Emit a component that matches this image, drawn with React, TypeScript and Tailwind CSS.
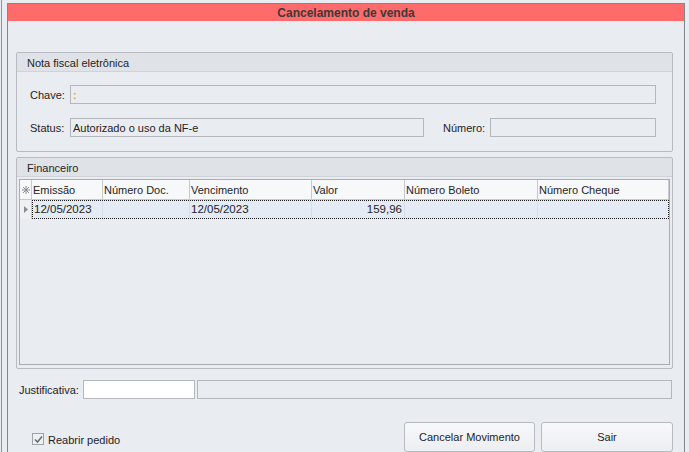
import React from "react";

const columns = [
  { key: "emissao", label: "Emissão", w: "w-[71px]" },
  { key: "doc", label: "Número Doc.", w: "w-[87px]" },
  { key: "venc", label: "Vencimento", w: "w-[122px]" },
  { key: "valor", label: "Valor", w: "w-[93px]" },
  { key: "boleto", label: "Número Boleto", w: "w-[133px]" },
  { key: "cheque", label: "Número Cheque", w: "w-[131px]" },
];

const row: Record<string, string> = {
  emissao: "12/05/2023",
  doc: "",
  venc: "12/05/2023",
  valor: "159,96",
  boleto: "",
  cheque: "",
};

function GroupHeader({ title }: { title: string }) {
  return (
    <div className="h-[19px] border-b border-[#cfd3d8] bg-[#dfe3e8] pl-[10px] pt-[3px] flex items-center leading-none">
      {title}
    </div>
  );
}

function Field({ className, children }: { className: string; children?: React.ReactNode }) {
  return (
    <div className={`h-[19px] border border-[#b4b8bd] flex items-center px-[2px] pt-[1px] leading-none ${className}`}>
      {children}
    </div>
  );
}

function AsteriskIcon() {
  return (
    <svg width="8" height="8" viewBox="0 0 8 8" className="text-[#8a8e94]">
      <g stroke="currentColor" strokeWidth="1">
        <line x1="4" y1="0" x2="4" y2="8" />
        <line x1="0" y1="4" x2="8" y2="4" />
        <line x1="1" y1="1" x2="7" y2="7" />
        <line x1="7" y1="1" x2="1" y2="7" />
      </g>
    </svg>
  );
}

export default function App() {
  return (
    <div className="w-[689px] h-[452px] overflow-hidden bg-[#e9ecf0] flex text-[11px] text-[#1f2326] font-['Liberation_Sans',Arial,sans-serif]">
      <div className="w-px ml-px bg-[#8d9399]" />
      <div className="ml-[5px] mt-[3px] w-[678px] border-t border-l border-r border-[#80868d] flex flex-col">
        <div className="h-[18px] bg-[#ff6b6b] flex items-center justify-center pt-[1px] font-bold text-[12px] text-[#3a3a3a] leading-none">
          Cancelamento de venda
        </div>

        <div className="flex flex-col pt-[31px]">
          {/* Nota fiscal eletrônica */}
          <div className="ml-[8px] w-[657px] h-[100px] border border-[#b8bcc2] rounded-[2px] flex flex-col">
            <GroupHeader title="Nota fiscal eletrônica" />
            <div className="flex items-center mt-[13px] pl-[13px]">
              <span className="w-[40px] pt-[2px]">Chave:</span>
              <Field className="w-[586px]">
                <span className="text-[#f29a3c] font-bold">:</span>
              </Field>
            </div>
            <div className="flex items-center mt-[14px] pl-[13px]">
              <span className="w-[40px] pt-[2px]">Status:</span>
              <Field className="w-[354px]">Autorizado o uso da NF-e</Field>
              <span className="ml-[19px] w-[47px] pt-[2px]">Número:</span>
              <Field className="w-[166px]" />
            </div>
          </div>

          {/* Financeiro */}
          <div className="ml-[8px] mt-[5px] w-[657px] h-[212px] border border-[#b8bcc2] rounded-[2px] flex flex-col">
            <GroupHeader title="Financeiro" />
            <div className="ml-[2px] mt-[2px] w-[651px] h-[186px] border border-[#a9adb3] flex flex-col">
              <div className="h-[20px] flex bg-[#f7f8fa] border-b border-[#c6cace]">
                <div className="w-[12px] border-r border-[#c6cace] flex items-center justify-center">
                  <AsteriskIcon />
                </div>
                {columns.map((c) => (
                  <div key={c.key} className={`${c.w} border-r border-[#c6cace] pl-[1px] pt-[2px] flex items-center leading-none`}>
                    {c.label}
                  </div>
                ))}
              </div>
              <div className="h-[19px] flex">
                <div className="w-[12px] bg-[#eef0f3] border-r border-[#c6cace] flex items-center justify-center">
                  <svg width="4" height="7" viewBox="0 0 4 7">
                    <path d="M0 0 L4 3.5 L0 7 Z" fill="#8a8e94" />
                  </svg>
                </div>
                <div className="flex-1 flex bg-[#e4ebf5] border border-dotted border-[#1a1a1a]">
                  {columns.map((c, i) => (
                    <div
                      key={c.key}
                      className={`${i === 0 ? "w-[70px]" : i === columns.length - 1 ? "w-[129px]" : c.w} ${
                        i === columns.length - 1 ? "" : "border-r border-[#d8dee6]"
                      } flex items-center px-[1px] leading-none text-[11.5px] ${c.key === "valor" ? "justify-end pr-[2px]" : ""}`}
                    >
                      {row[c.key]}
                    </div>
                  ))}
                </div>
              </div>
              <div className="flex-1" />
            </div>
          </div>

          {/* Justificativa */}
          <div className="flex items-center mt-[11px] pl-[11px]">
            <span className="w-[64px] pt-[2px]">Justificativa:</span>
            <div className="w-[112px] h-[19px] bg-white border border-[#b4b8bd]" />
            <Field className="ml-[2px] w-[475px]" />
          </div>

          {/* Bottom */}
          <div className="flex mt-[23px]">
            <label className="ml-[24px] mt-[10px] flex items-center gap-[4px] h-[14px]">
              <span className="w-[12px] h-[12px] border border-[#9ea3a9] bg-[#eef0f3] flex items-center justify-center">
                <svg width="9" height="9" viewBox="0 0 9 9">
                  <path d="M1 4.5 L3.5 7 L8 1.5" fill="none" stroke="#6b6f74" strokeWidth="1.6" />
                </svg>
              </span>
              <span className="pt-[2px]">Reabrir pedido</span>
            </label>
            <div className="ml-auto mr-[11px] flex gap-[6px]">
              <button className="w-[131px] h-[30px] border border-[#b7bbc1] rounded-[3px] bg-gradient-to-b from-[#f7f8fa] to-[#eceef2] pt-[1px] text-[11px] text-[#1f2326]">
                Cancelar Movimento
              </button>
              <button className="w-[132px] h-[30px] border border-[#b7bbc1] rounded-[3px] bg-gradient-to-b from-[#f7f8fa] to-[#eceef2] pt-[1px] text-[11px] text-[#1f2326]">
                Sair
              </button>
            </div>
          </div>
        </div>
      </div>
    </div>
  );
}
